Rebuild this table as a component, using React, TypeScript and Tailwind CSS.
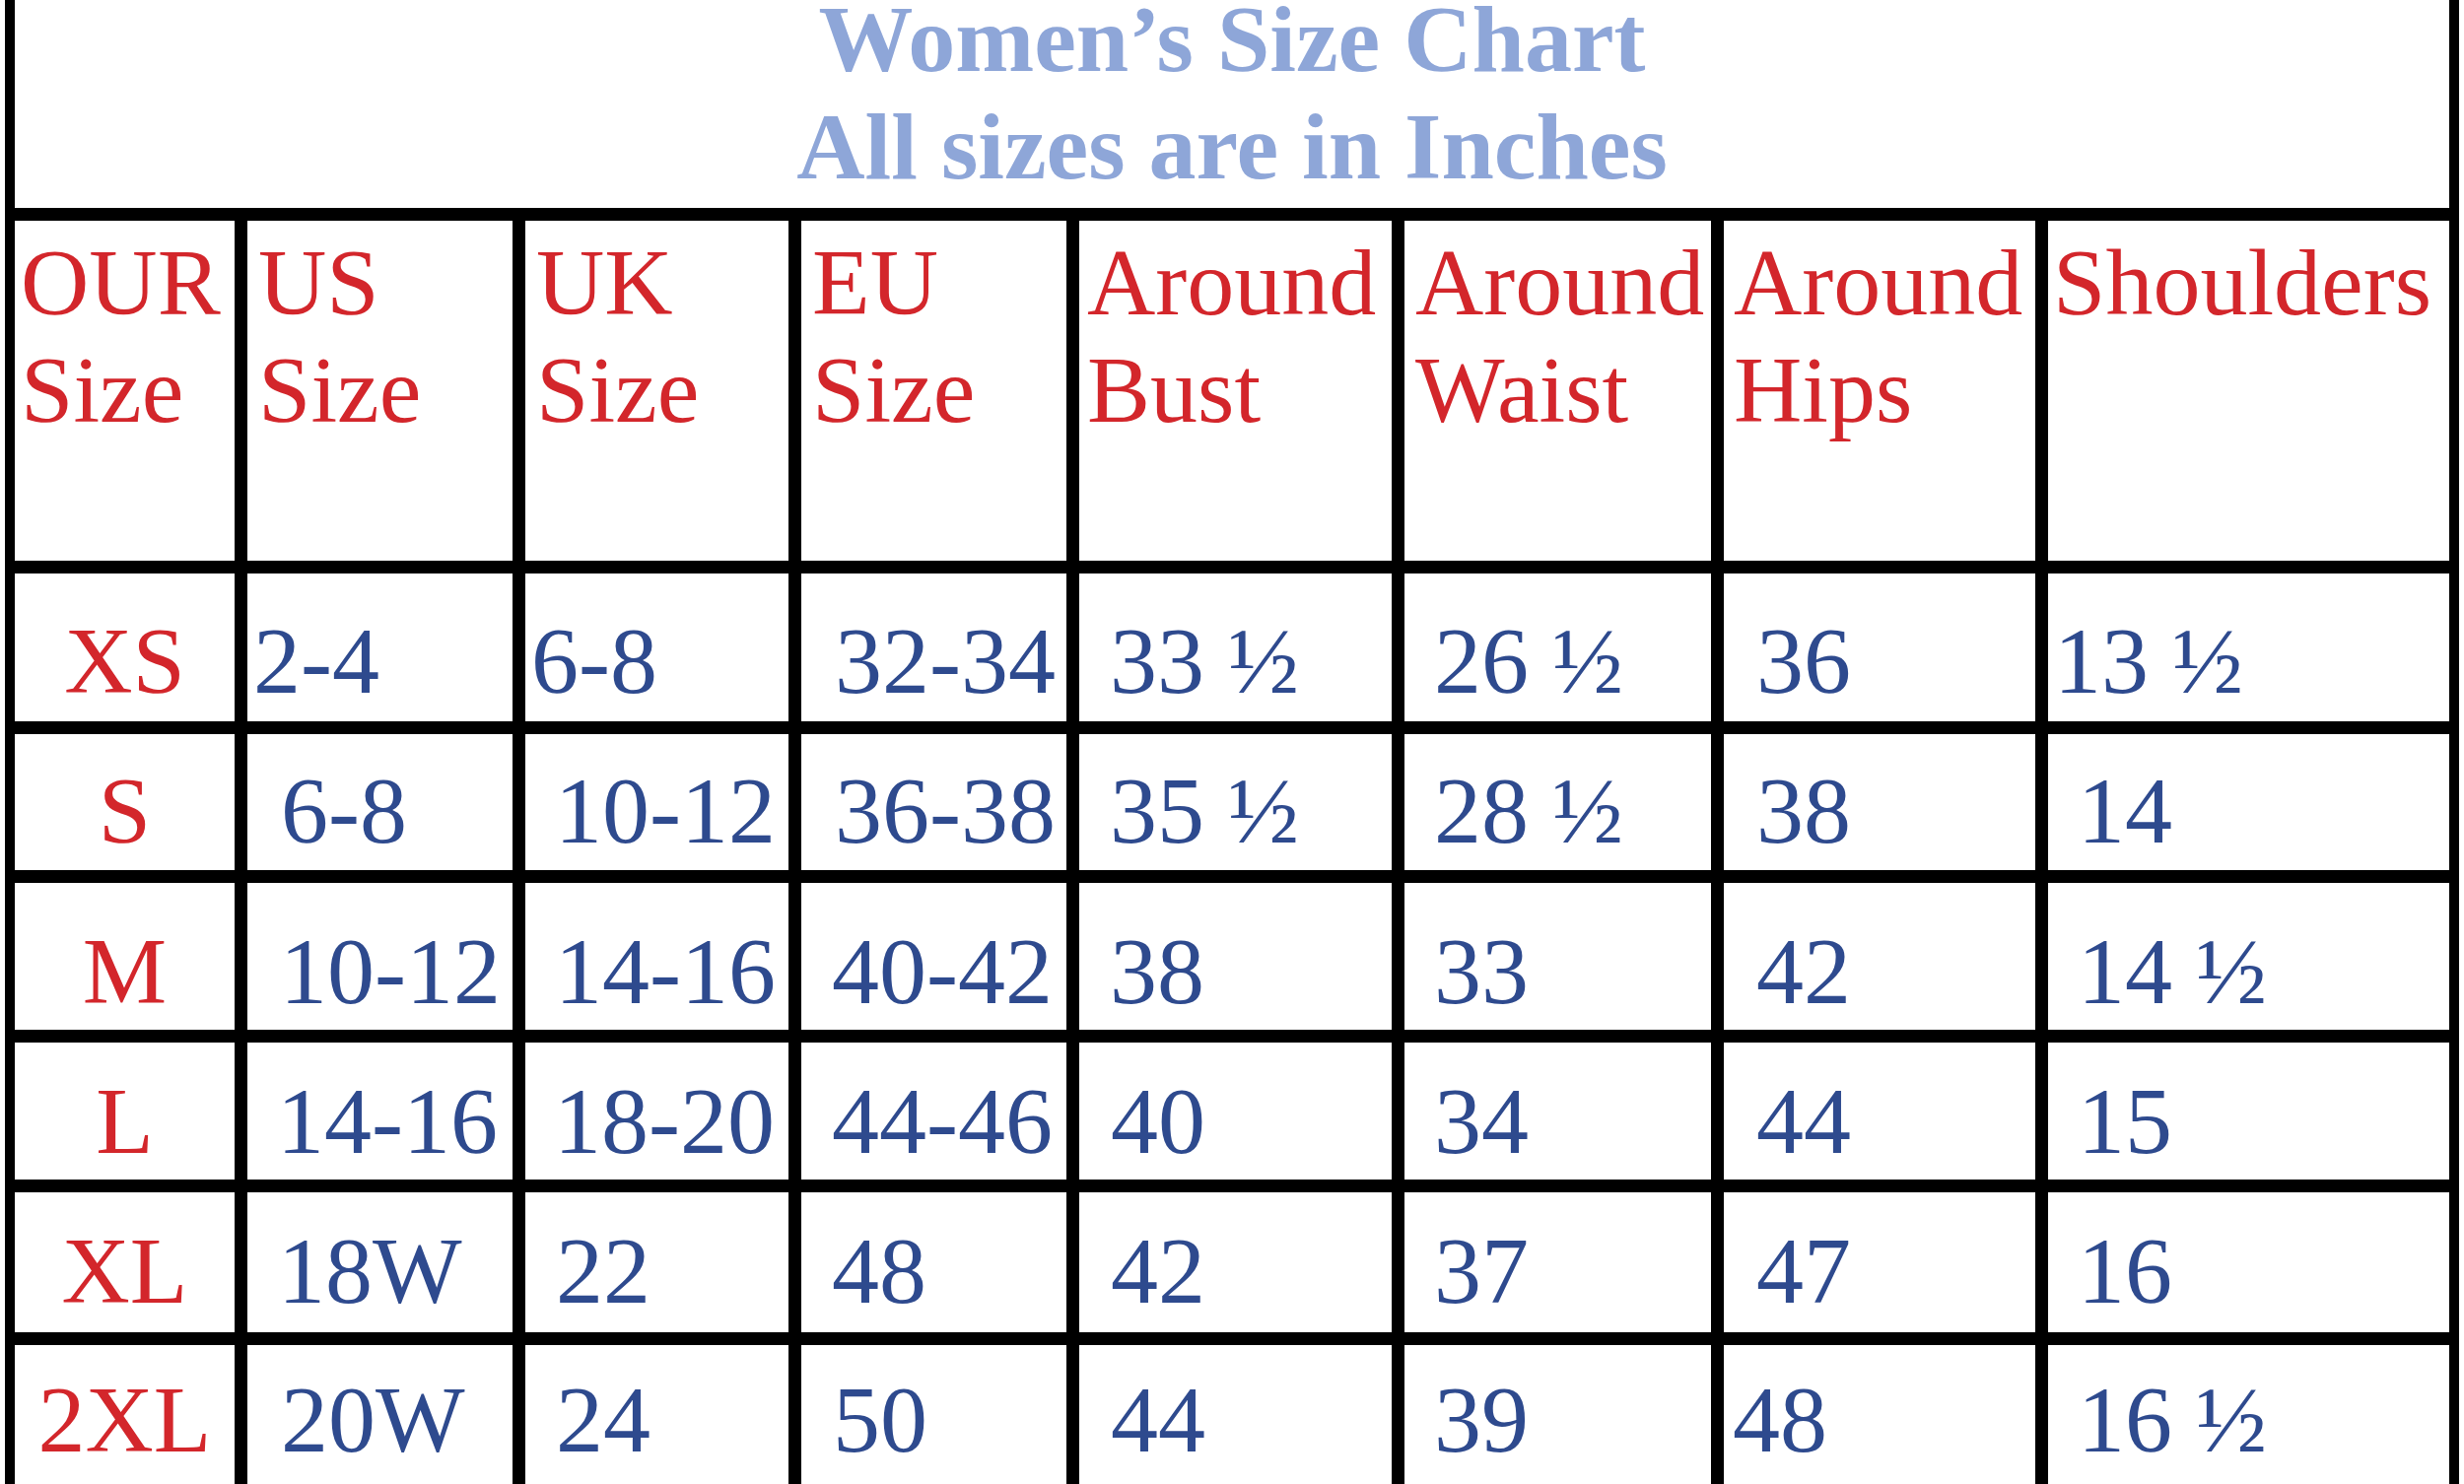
import React from "react";

const widths = ["w-[223px]", "w-[282px]", "w-[280px]", "w-[282px]", "w-[330px]", "w-[324px]", "w-[329px]", "w-[420px]"];

type Cell = { t: string; pl: string };

const headers: { lines: string[]; pl: string }[] = [
  { lines: ["OUR", "Size"], pl: "pl-[6px]" },
  { lines: ["US", "Size"], pl: "pl-[11px]" },
  { lines: ["UK", "Size"], pl: "pl-[11px]" },
  { lines: ["EU", "Size"], pl: "pl-[11px]" },
  { lines: ["Around", "Bust"], pl: "pl-[8px]" },
  { lines: ["Around", "Waist"], pl: "pl-[11px]" },
  { lines: ["Around", "Hips"], pl: "pl-[10px]" },
  { lines: ["Shoulders"], pl: "pl-[5px]" },
];

const rows: { size: string; h: string; pb: string; cells: Cell[] }[] = [
  {
    size: "XS",
    h: "h-[163px]",
    pb: "pb-[13px]",
    cells: [
      { t: "2-4", pl: "pl-[6px]" },
      { t: "6-8", pl: "pl-[6px]" },
      { t: "32-34", pl: "pl-[34px]" },
      { t: "33 ½", pl: "pl-[31px]" },
      { t: "26 ½", pl: "pl-[30px]" },
      { t: "36", pl: "pl-[33px]" },
      { t: "13 ½", pl: "pl-[6px]" },
    ],
  },
  {
    size: "S",
    h: "h-[151px]",
    pb: "pb-[12px]",
    cells: [
      { t: "6-8", pl: "pl-[34px]" },
      { t: "10-12", pl: "pl-[30px]" },
      { t: "36-38", pl: "pl-[34px]" },
      { t: "35 ½", pl: "pl-[31px]" },
      { t: "28 ½", pl: "pl-[30px]" },
      { t: "38", pl: "pl-[33px]" },
      { t: "14", pl: "pl-[30px]" },
    ],
  },
  {
    size: "M",
    h: "h-[162px]",
    pb: "pb-[11px]",
    cells: [
      { t: "10-12", pl: "pl-[33px]" },
      { t: "14-16", pl: "pl-[30px]" },
      { t: "40-42", pl: "pl-[31px]" },
      { t: "38", pl: "pl-[31px]" },
      { t: "33", pl: "pl-[30px]" },
      { t: "42", pl: "pl-[33px]" },
      { t: "14 ½", pl: "pl-[30px]" },
    ],
  },
  {
    size: "L",
    h: "h-[152px]",
    pb: "pb-[11px]",
    cells: [
      { t: "14-16", pl: "pl-[30px]" },
      { t: "18-20", pl: "pl-[29px]" },
      { t: "44-46", pl: "pl-[31px]" },
      { t: "40", pl: "pl-[32px]" },
      { t: "34", pl: "pl-[30px]" },
      { t: "44", pl: "pl-[33px]" },
      { t: "15", pl: "pl-[30px]" },
    ],
  },
  {
    size: "XL",
    h: "h-[155px]",
    pb: "pb-[14px]",
    cells: [
      { t: "18W", pl: "pl-[31px]" },
      { t: "22", pl: "pl-[31px]" },
      { t: "48", pl: "pl-[31px]" },
      { t: "42", pl: "pl-[32px]" },
      { t: "37", pl: "pl-[30px]" },
      { t: "47", pl: "pl-[33px]" },
      { t: "16", pl: "pl-[30px]" },
    ],
  },
  {
    size: "2XL",
    h: "h-[154px]",
    pb: "pb-[17px]",
    cells: [
      { t: "20W", pl: "pl-[34px]" },
      { t: "24", pl: "pl-[31px]" },
      { t: "50", pl: "pl-[32px]" },
      { t: "44", pl: "pl-[32px]" },
      { t: "39", pl: "pl-[30px]" },
      { t: "48", pl: "pl-[9px]" },
      { t: "16 ½", pl: "pl-[30px]" },
    ],
  },
];

export default function App() {
  return (
    <div className="w-[2500px] h-[1506px] bg-white overflow-hidden px-[5px] font-['Liberation_Serif','Times_New_Roman',serif]">
      <div className="h-full border-x-[10px] border-black flex flex-col">
        {/* Title */}
        <div className="h-[211px] shrink-0 flex flex-col items-center text-[96px] leading-[80px] font-bold text-[#8ea6d8] whitespace-nowrap">
          <div>Women’s Size Chart</div>
          <div className="mt-[29px]">All sizes are in Inches</div>
        </div>

        {/* Header */}
        <div className="h-[358px] shrink-0 border-t-[13px] border-black flex">
          {headers.map((h, i) => (
            <div
              key={i}
              className={`${widths[i]} shrink-0 h-full ${i > 0 ? "border-l-[13px] border-black" : ""} ${h.pl} pt-[8px] text-[96px] leading-[109px] text-[#d3262b] whitespace-nowrap`}
            >
              {h.lines.map((l, j) => (
                <div key={j}>{l}</div>
              ))}
            </div>
          ))}
        </div>

        {/* Data rows */}
        {rows.map((r, ri) => (
          <div key={ri} className={`${r.h} shrink-0 border-t-[13px] border-black flex`}>
            <div className={`${widths[0]} shrink-0 h-full flex items-end justify-center ${r.pb} text-[96px] leading-[96px] text-[#d3262b] whitespace-nowrap`}>
              {r.size}
            </div>
            {r.cells.map((c, ci) => (
              <div
                key={ci}
                className={`${widths[ci + 1]} shrink-0 h-full border-l-[13px] border-black flex items-end ${c.pl} ${r.pb} text-[96px] leading-[96px] text-[#2e4a8e] whitespace-nowrap`}
              >
                {c.t}
              </div>
            ))}
          </div>
        ))}
      </div>
    </div>
  );
}
